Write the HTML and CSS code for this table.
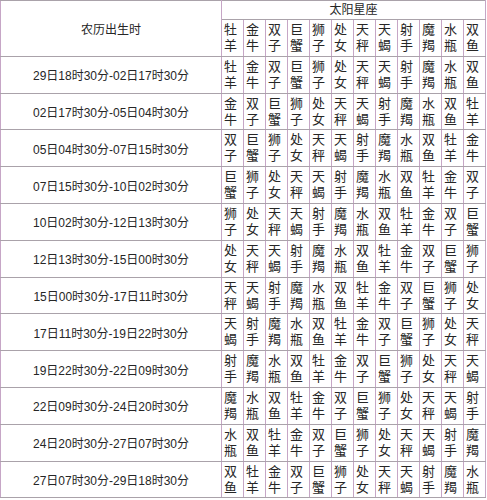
FILE: index.html
```html
<!DOCTYPE html>
<html lang="zh-CN">
<head>
<meta charset="utf-8">
<title>太阳星座对照表</title>
<link rel="stylesheet" href="styles.css">
</head>
<body>
<table class="chart">
<colgroup>
<col class="c-time">
<col class="c-sign"><col class="c-sign"><col class="c-sign"><col class="c-sign"><col class="c-sign"><col class="c-sign">
<col class="c-sign"><col class="c-sign"><col class="c-sign"><col class="c-sign"><col class="c-sign"><col class="c-sign">
</colgroup>
<tr class="r-title">
<td class="head" rowspan="2">农历出生时</td>
<td class="title" colspan="12">太阳星座</td>
</tr>
<tr>
<td class="z">牡<br>羊</td><td class="z">金<br>牛</td><td class="z">双<br>子</td><td class="z">巨<br>蟹</td><td class="z">狮<br>子</td><td class="z">处<br>女</td><td class="z">天<br>秤</td><td class="z">天<br>蝎</td><td class="z">射<br>手</td><td class="z">魔<br>羯</td><td class="z">水<br>瓶</td><td class="z">双<br>鱼</td>
</tr>
<tr>
<td class="t">29日18时30分-02日17时30分</td>
<td class="z">牡<br>羊</td><td class="z">金<br>牛</td><td class="z">双<br>子</td><td class="z">巨<br>蟹</td><td class="z">狮<br>子</td><td class="z">处<br>女</td><td class="z">天<br>秤</td><td class="z">天<br>蝎</td><td class="z">射<br>手</td><td class="z">魔<br>羯</td><td class="z">水<br>瓶</td><td class="z">双<br>鱼</td>
</tr>
<tr>
<td class="t">02日17时30分-05日04时30分</td>
<td class="z">金<br>牛</td><td class="z">双<br>子</td><td class="z">巨<br>蟹</td><td class="z">狮<br>子</td><td class="z">处<br>女</td><td class="z">天<br>秤</td><td class="z">天<br>蝎</td><td class="z">射<br>手</td><td class="z">魔<br>羯</td><td class="z">水<br>瓶</td><td class="z">双<br>鱼</td><td class="z">牡<br>羊</td>
</tr>
<tr>
<td class="t">05日04时30分-07日15时30分</td>
<td class="z">双<br>子</td><td class="z">巨<br>蟹</td><td class="z">狮<br>子</td><td class="z">处<br>女</td><td class="z">天<br>秤</td><td class="z">天<br>蝎</td><td class="z">射<br>手</td><td class="z">魔<br>羯</td><td class="z">水<br>瓶</td><td class="z">双<br>鱼</td><td class="z">牡<br>羊</td><td class="z">金<br>牛</td>
</tr>
<tr>
<td class="t">07日15时30分-10日02时30分</td>
<td class="z">巨<br>蟹</td><td class="z">狮<br>子</td><td class="z">处<br>女</td><td class="z">天<br>秤</td><td class="z">天<br>蝎</td><td class="z">射<br>手</td><td class="z">魔<br>羯</td><td class="z">水<br>瓶</td><td class="z">双<br>鱼</td><td class="z">牡<br>羊</td><td class="z">金<br>牛</td><td class="z">双<br>子</td>
</tr>
<tr>
<td class="t">10日02时30分-12日13时30分</td>
<td class="z">狮<br>子</td><td class="z">处<br>女</td><td class="z">天<br>秤</td><td class="z">天<br>蝎</td><td class="z">射<br>手</td><td class="z">魔<br>羯</td><td class="z">水<br>瓶</td><td class="z">双<br>鱼</td><td class="z">牡<br>羊</td><td class="z">金<br>牛</td><td class="z">双<br>子</td><td class="z">巨<br>蟹</td>
</tr>
<tr>
<td class="t">12日13时30分-15日00时30分</td>
<td class="z">处<br>女</td><td class="z">天<br>秤</td><td class="z">天<br>蝎</td><td class="z">射<br>手</td><td class="z">魔<br>羯</td><td class="z">水<br>瓶</td><td class="z">双<br>鱼</td><td class="z">牡<br>羊</td><td class="z">金<br>牛</td><td class="z">双<br>子</td><td class="z">巨<br>蟹</td><td class="z">狮<br>子</td>
</tr>
<tr>
<td class="t">15日00时30分-17日11时30分</td>
<td class="z">天<br>秤</td><td class="z">天<br>蝎</td><td class="z">射<br>手</td><td class="z">魔<br>羯</td><td class="z">水<br>瓶</td><td class="z">双<br>鱼</td><td class="z">牡<br>羊</td><td class="z">金<br>牛</td><td class="z">双<br>子</td><td class="z">巨<br>蟹</td><td class="z">狮<br>子</td><td class="z">处<br>女</td>
</tr>
<tr>
<td class="t">17日11时30分-19日22时30分</td>
<td class="z">天<br>蝎</td><td class="z">射<br>手</td><td class="z">魔<br>羯</td><td class="z">水<br>瓶</td><td class="z">双<br>鱼</td><td class="z">牡<br>羊</td><td class="z">金<br>牛</td><td class="z">双<br>子</td><td class="z">巨<br>蟹</td><td class="z">狮<br>子</td><td class="z">处<br>女</td><td class="z">天<br>秤</td>
</tr>
<tr>
<td class="t">19日22时30分-22日09时30分</td>
<td class="z">射<br>手</td><td class="z">魔<br>羯</td><td class="z">水<br>瓶</td><td class="z">双<br>鱼</td><td class="z">牡<br>羊</td><td class="z">金<br>牛</td><td class="z">双<br>子</td><td class="z">巨<br>蟹</td><td class="z">狮<br>子</td><td class="z">处<br>女</td><td class="z">天<br>秤</td><td class="z">天<br>蝎</td>
</tr>
<tr>
<td class="t">22日09时30分-24日20时30分</td>
<td class="z">魔<br>羯</td><td class="z">水<br>瓶</td><td class="z">双<br>鱼</td><td class="z">牡<br>羊</td><td class="z">金<br>牛</td><td class="z">双<br>子</td><td class="z">巨<br>蟹</td><td class="z">狮<br>子</td><td class="z">处<br>女</td><td class="z">天<br>秤</td><td class="z">天<br>蝎</td><td class="z">射<br>手</td>
</tr>
<tr>
<td class="t">24日20时30分-27日07时30分</td>
<td class="z">水<br>瓶</td><td class="z">双<br>鱼</td><td class="z">牡<br>羊</td><td class="z">金<br>牛</td><td class="z">双<br>子</td><td class="z">巨<br>蟹</td><td class="z">狮<br>子</td><td class="z">处<br>女</td><td class="z">天<br>秤</td><td class="z">天<br>蝎</td><td class="z">射<br>手</td><td class="z">魔<br>羯</td>
</tr>
<tr>
<td class="t">27日07时30分-29日18时30分</td>
<td class="z">双<br>鱼</td><td class="z">牡<br>羊</td><td class="z">金<br>牛</td><td class="z">双<br>子</td><td class="z">巨<br>蟹</td><td class="z">狮<br>子</td><td class="z">处<br>女</td><td class="z">天<br>秤</td><td class="z">天<br>蝎</td><td class="z">射<br>手</td><td class="z">魔<br>羯</td><td class="z">水<br>瓶</td>
</tr>
</table>
</body>
</html>
```

FILE: styles.css
```css
html, body {
  margin: 0;
  padding: 0;
  background: #ffffff;
}

body {
  font-family: "Liberation Sans", "Noto Sans CJK SC", sans-serif;
  color: #262626;
}

.chart {
  border-collapse: collapse;
  table-layout: fixed;
  width: 486px;
  border: 1px solid #9c7f9c;
}

.c-time {
  width: 221px;
}

.c-sign {
  width: 22px;
}

.chart td {
  padding: 0;
  border-left: 1px solid #c6a6c6;
  border-right: 1px solid #c6a6c6;
  border-top: 1px solid #aaa2aa;
  border-bottom: 1px solid #aaa2aa;
}

.head {
  font-size: 12px;
  text-align: center;
  vertical-align: middle;
}

.title {
  height: 18px;
  font-size: 12px;
  line-height: 17px;
  text-align: center;
  vertical-align: middle;
}

.t {
  height: 35.8px;
  font-size: 12px;
  text-align: center;
  vertical-align: middle;
}

.chart td.z {
  height: 33.8px;
  padding: 2px 0 0 2px;
  font-size: 13px;
  line-height: 16px;
  text-align: left;
  vertical-align: top;
  overflow: hidden;
}
```
